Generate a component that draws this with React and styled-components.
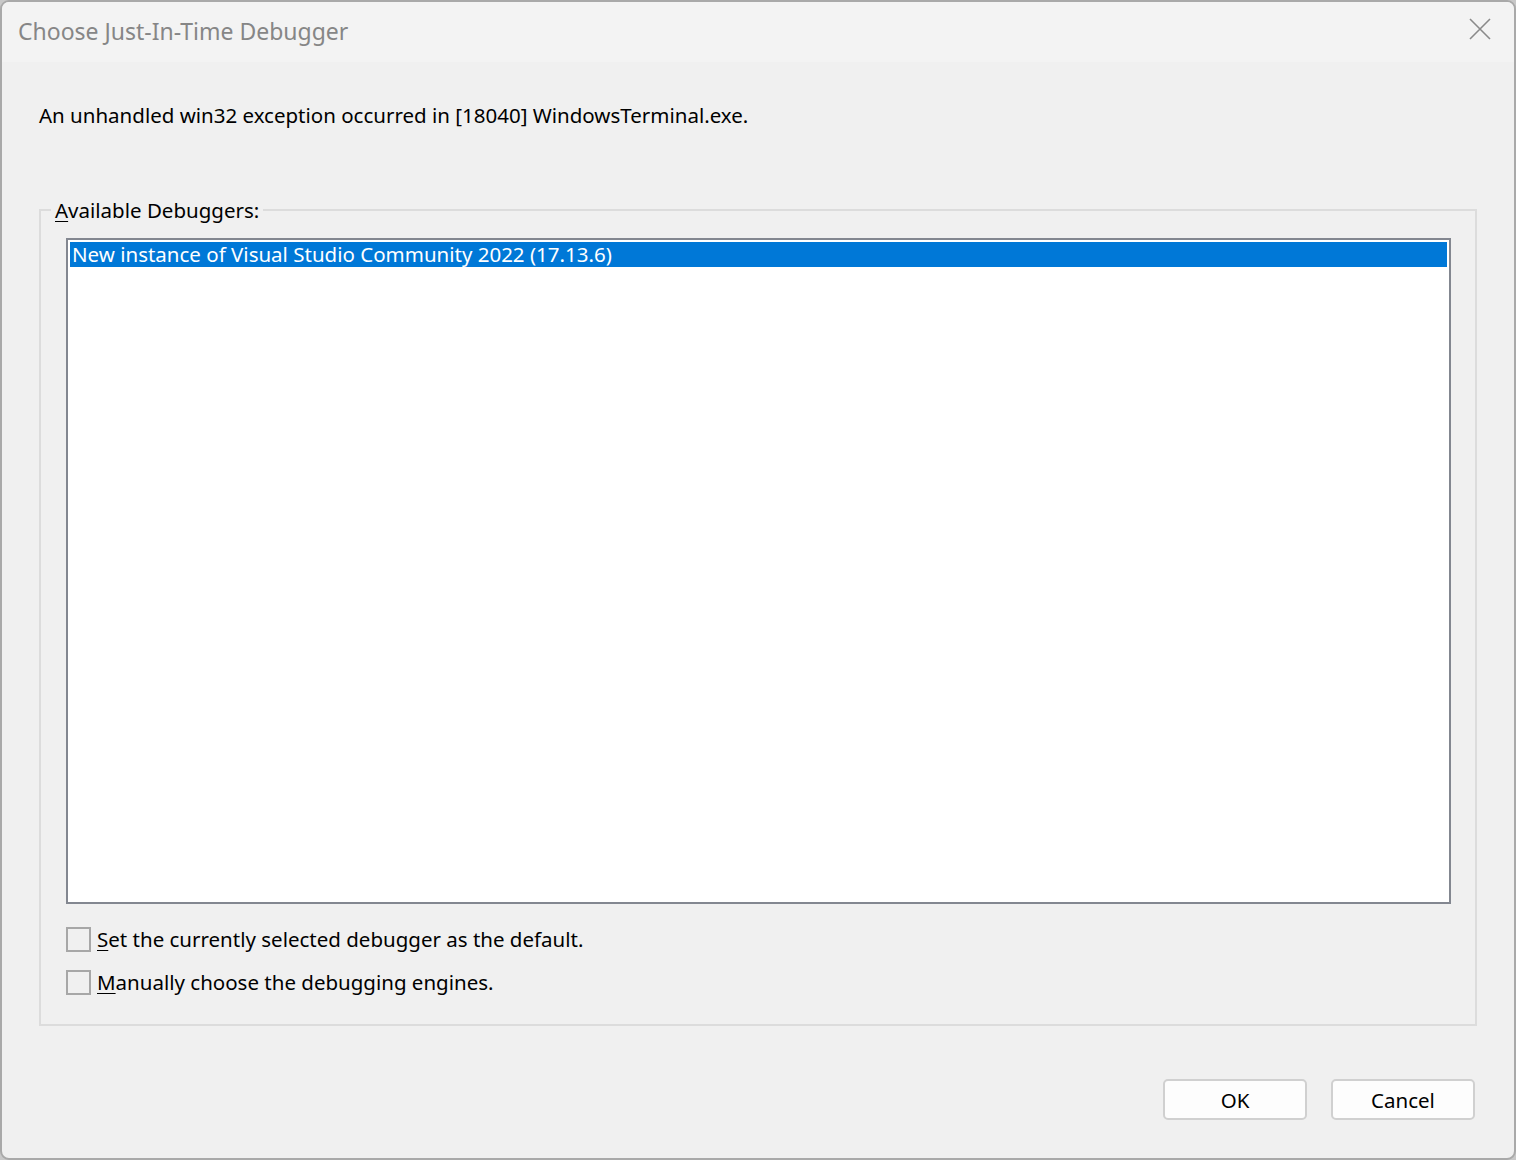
import React, { useState } from 'react';
import styled, { createGlobalStyle, css } from 'styled-components';

const GlobalStyle = createGlobalStyle`
  html, body {
    margin: 0;
    padding: 0;
    background: #c8c8c8;
  }
  body {
    font-family: "Noto Sans", "Open Sans", sans-serif;
    font-size: 20.5px;
    color: #000;
  }
`;

const Window = styled.div`
  box-sizing: border-box;
  width: 1516px;
  height: 1160px;
  display: flex;
  flex-direction: column;
  background: #f0f0f0;
  border: 2px solid #a9a9a9;
  border-radius: 9px;
  overflow: hidden;
`;

const TitleBar = styled.div`
  height: 60px;
  display: flex;
  align-items: center;
  justify-content: space-between;
  padding: 0 14px 0 16px;
  background: #f3f3f3;
`;

const Title = styled.div`
  color: #868686;
  font-size: 23px;
  margin-top: -2px;
`;

const CloseButton = styled.button`
  border: none;
  background: transparent;
  width: 40px;
  height: 40px;
  display: flex;
  align-items: center;
  justify-content: center;
  padding: 0;
  margin-top: -6px;
  cursor: default;
`;

const Body = styled.div`
  flex: 1;
  display: flex;
  flex-direction: column;
  padding: 40px 37px 38px 37px;
`;

const Message = styled.p`
  margin: 0;
  line-height: 26px;
`;

const GroupBox = styled.fieldset`
  margin: 70px 0 0 0;
  padding: 16px 24px 29px 25px;
  border: 2px solid #dcdcdc;
  display: flex;
  flex-direction: column;
  gap: 17px;
`;

const Legend = styled.legend`
  padding: 0 4px 0 4px;
  margin-left: -15px;
  line-height: 24px;
`;

const Mnemonic = styled.span`
  text-decoration: underline;
  text-underline-offset: 3px;
  text-decoration-thickness: 1px;
`;

const ListBox = styled.div`
  height: 658px;
  border: 2px solid #838790;
  background: #fff;
  padding: 2px;
  margin-bottom: 5px;
`;

const ListItem = styled.div`
  height: 25px;
  line-height: 25px;
  padding-left: 2px;
  white-space: nowrap;
  ${({ selected }) =>
    selected &&
    css`
      background: #0078d7;
      color: #fff;
    `}
`;

const CheckRow = styled.label`
  display: flex;
  align-items: center;
  gap: 6px;
  height: 26px;
`;

const CheckBox = styled.span`
  box-sizing: border-box;
  width: 25px;
  height: 25px;
  border: 2px solid #a7a7a7;
  background: #f0f0f0;
  display: inline-block;
`;

const ButtonRow = styled.div`
  margin-top: auto;
  display: flex;
  justify-content: flex-end;
  gap: 24px;
  padding-right: 2px;
`;

const DialogButton = styled.button`
  box-sizing: border-box;
  width: 144px;
  height: 41px;
  background: #fdfdfd;
  border: 2px solid #d0d0d0;
  border-radius: 5px;
  font-family: inherit;
  font-size: 20.5px;
  color: #000;
  padding: 0;
`;

const debuggers = ['New instance of Visual Studio Community 2022 (17.13.6)'];

const App = () => {
  const [selected] = useState(0);
  return (
    <>
      <GlobalStyle />
      <Window>
        <TitleBar>
          <Title>Choose Just-In-Time Debugger</Title>
          <CloseButton aria-label="Close">
            <svg width="22" height="22" viewBox="0 0 22 22">
              <path d="M1 1 L21 21 M21 1 L1 21" stroke="#8a8a8a" strokeWidth="1.6" />
            </svg>
          </CloseButton>
        </TitleBar>
        <Body>
          <Message>
            An unhandled win32 exception occurred in [18040] WindowsTerminal.exe.
          </Message>
          <GroupBox>
            <Legend>
              <Mnemonic>A</Mnemonic>vailable Debuggers:
            </Legend>
            <ListBox>
              {debuggers.map((d, i) => (
                <ListItem key={d} selected={i === selected}>
                  {d}
                </ListItem>
              ))}
            </ListBox>
            <CheckRow>
              <CheckBox />
              <span>
                <Mnemonic>S</Mnemonic>et the currently selected debugger as the default.
              </span>
            </CheckRow>
            <CheckRow>
              <CheckBox />
              <span>
                <Mnemonic>M</Mnemonic>anually choose the debugging engines.
              </span>
            </CheckRow>
          </GroupBox>
          <ButtonRow>
            <DialogButton>OK</DialogButton>
            <DialogButton>Cancel</DialogButton>
          </ButtonRow>
        </Body>
      </Window>
    </>
  );
};

export default App;
